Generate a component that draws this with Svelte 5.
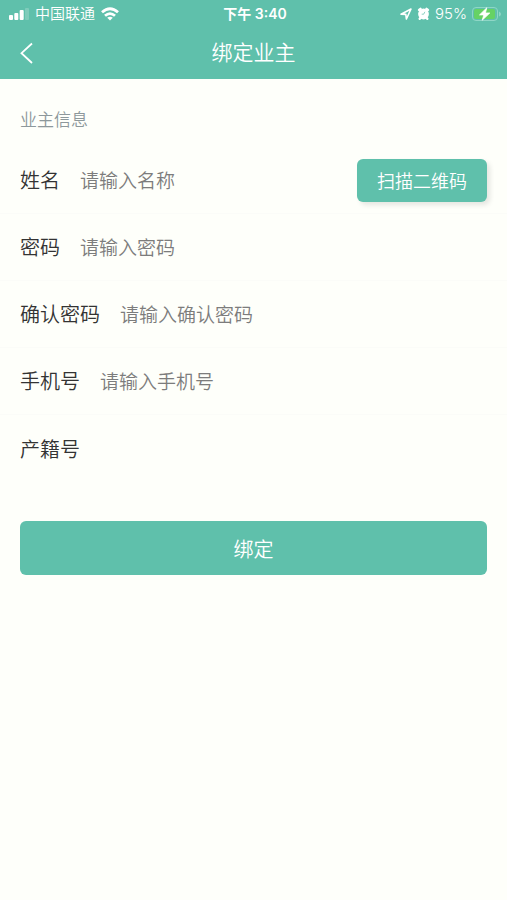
<script>
	let fields = $state([
		{ id: 'name', label: '姓名', type: 'text', placeholder: '请输入名称', value: '', scan: true },
		{ id: 'password', label: '密码', type: 'password', placeholder: '请输入密码', value: '' },
		{ id: 'confirm', label: '确认密码', type: 'password', placeholder: '请输入确认密码', value: '' },
		{ id: 'phone', label: '手机号', type: 'tel', placeholder: '请输入手机号', value: '' },
		{ id: 'estate', label: '产籍号', type: 'text', placeholder: '', value: '' }
	]);
</script>

<div class="page">
	<header>
		<div class="status">
			<div class="side">
				<svg width="20" height="12" viewBox="0 0 20 12" fill="#fff">
					<rect x="0" y="7" width="4" height="5" rx="1" />
					<rect x="5.3" y="5" width="4" height="7" rx="1" />
					<rect x="10.7" y="2" width="4" height="10" rx="1" />
					<rect x="16" y="0" width="4" height="12" rx="1" opacity="0.2" />
				</svg>
				<span>中国联通</span>
				<svg width="18" height="14" viewBox="0 0 18 14" fill="none" stroke="#fff" stroke-width="2.8">
					<path d="M1 5.2Q9-1.8 17 5.2" />
					<path d="M4 8.8Q9 4.4 14 8.8" />
					<path d="M9 13.5L6.2 10.7Q9 8.6 11.8 10.7Z" fill="#fff" stroke="none" />
				</svg>
			</div>
			<span class="time">下午 3:40</span>
			<div class="side right">
				<svg width="12" height="12" viewBox="0 0 12 12" fill="none" stroke="#fff" stroke-width="1.6" stroke-linejoin="round">
					<path d="M1 6.2L11 1L6.4 11L5.8 6.4Z" />
				</svg>
				<svg width="13" height="13" viewBox="0 0 13 13">
					<circle cx="6.5" cy="7" r="5.4" fill="#fff" />
					<path d="M2.1 3L3.5 1.8M10.9 3L9.5 1.8M3.3 11L2.7 11.8M9.7 11L10.3 11.8" stroke="#fff" stroke-width="2.4" stroke-linecap="round" />
					<path d="M7.9 4.8L6.7 7.2H4.7" fill="none" stroke="#5fc0ab" stroke-width="0.7" />
				</svg>
				<span>95%</span>
				<svg width="29" height="14" viewBox="0 0 29 14">
					<rect x=".5" y=".5" width="25" height="13" rx="3.5" fill="none" stroke="#8fd6c6" />
					<rect x="2" y="2" width="21" height="10" rx="2" fill="#66d264" />
					<path d="M27 4.5Q29 5.5 29 7T27 9.5Z" fill="#8fd6c6" />
					<path d="M14.8 .8L7.5 7.9H11.8L10.2 13.2L17.8 6H13.4Z" fill="#fff" stroke="#fff" stroke-width=".8" stroke-linejoin="round" />
				</svg>
			</div>
		</div>
		<nav>
			<button class="back" aria-label="返回">
				<svg width="13" height="22" viewBox="0 0 13 22" fill="none" stroke="#fff" stroke-width="1.8">
					<path d="M12 1.5L1.5 11.2L12 21" />
				</svg>
			</button>
			<h1>绑定业主</h1>
		</nav>
	</header>

	<form onsubmit={(e) => e.preventDefault()}>
		<h2>业主信息</h2>
		{#each fields as field (field.id)}
			<div class="row">
				<label for={field.id}>{field.label}</label>
				<input id={field.id} type={field.type} placeholder={field.placeholder} bind:value={field.value} />
				{#if field.scan}
					<button type="button" class="scan">扫描二维码</button>
				{/if}
			</div>
		{/each}
		<button class="submit">绑定</button>
	</form>
</div>

<style>
	:global(body) {
		margin: 0;
		background: #fefffa;
	}

	.page {
		min-height: 100vh;
		background: #fefffa;
		font-family: 'Noto Sans CJK SC', sans-serif;
		font-weight: 350;
		color: #333;
	}

	button {
		border: 0;
		padding: 0;
		font-family: inherit;
		font-weight: inherit;
		color: #fff;
		background: #5fc0ab;
		cursor: pointer;
	}

	header {
		background: #5fc0ab;
		color: #fff;
	}

	/* status bar */
	.status {
		display: flex;
		align-items: center;
		height: 27px;
		padding: 0 6px 0 9px;
		font-family: Inter, 'Noto Sans CJK SC', sans-serif;
		font-size: 15px;
		font-weight: 350;
		line-height: 27px;
	}

	.side {
		display: flex;
		flex: 1;
		align-items: center;
		gap: 6px;
	}

	.right {
		justify-content: flex-end;
		gap: 5px;
	}

	.time {
		font-size: 14px;
		font-weight: 600;
	}

	nav {
		display: grid;
		grid-template-columns: 1fr auto 1fr;
		align-items: center;
		height: 52px;
		padding: 0 20px;
	}

	.back {
		display: flex;
		justify-self: start;
	}

	h1 {
		margin: 0;
		padding-bottom: 4px;
		font-size: 21px;
		font-weight: inherit;
		line-height: 48px;
	}

	/* form */
	form {
		padding-top: 27px;
	}

	h2 {
		margin: 0;
		padding: 0 20px 15px;
		font-size: 17px;
		font-weight: inherit;
		line-height: 26px;
		color: #8d989b;
	}

	.row {
		display: flex;
		align-items: center;
		gap: 20px;
		box-sizing: border-box;
		height: 67px;
		padding: 0 20px;
		border-bottom: 1px solid #fbfcf8;
	}

	.row:last-of-type {
		border-bottom: 0;
	}

	label {
		font-size: 20px;
		line-height: 28px;
	}

	input {
		flex: 1;
		min-width: 0;
		padding: 0;
		border: 0;
		outline: 0;
		background: none;
		font-family: inherit;
		font-size: 19px;
		font-weight: inherit;
		line-height: 28px;
		color: #333;
	}

	input::placeholder {
		color: #7c7c7c;
		opacity: 1;
	}

	.scan {
		height: 43px;
		padding: 0 20px;
		border-radius: 6px;
		box-shadow: 3px 3px 5px rgba(0, 0, 0, 0.1);
		font-size: 18px;
	}

	.submit {
		display: block;
		width: calc(100% - 40px);
		height: 54px;
		margin: 39px 20px 20px;
		border-radius: 6px;
		font-size: 20px;
	}
</style>
